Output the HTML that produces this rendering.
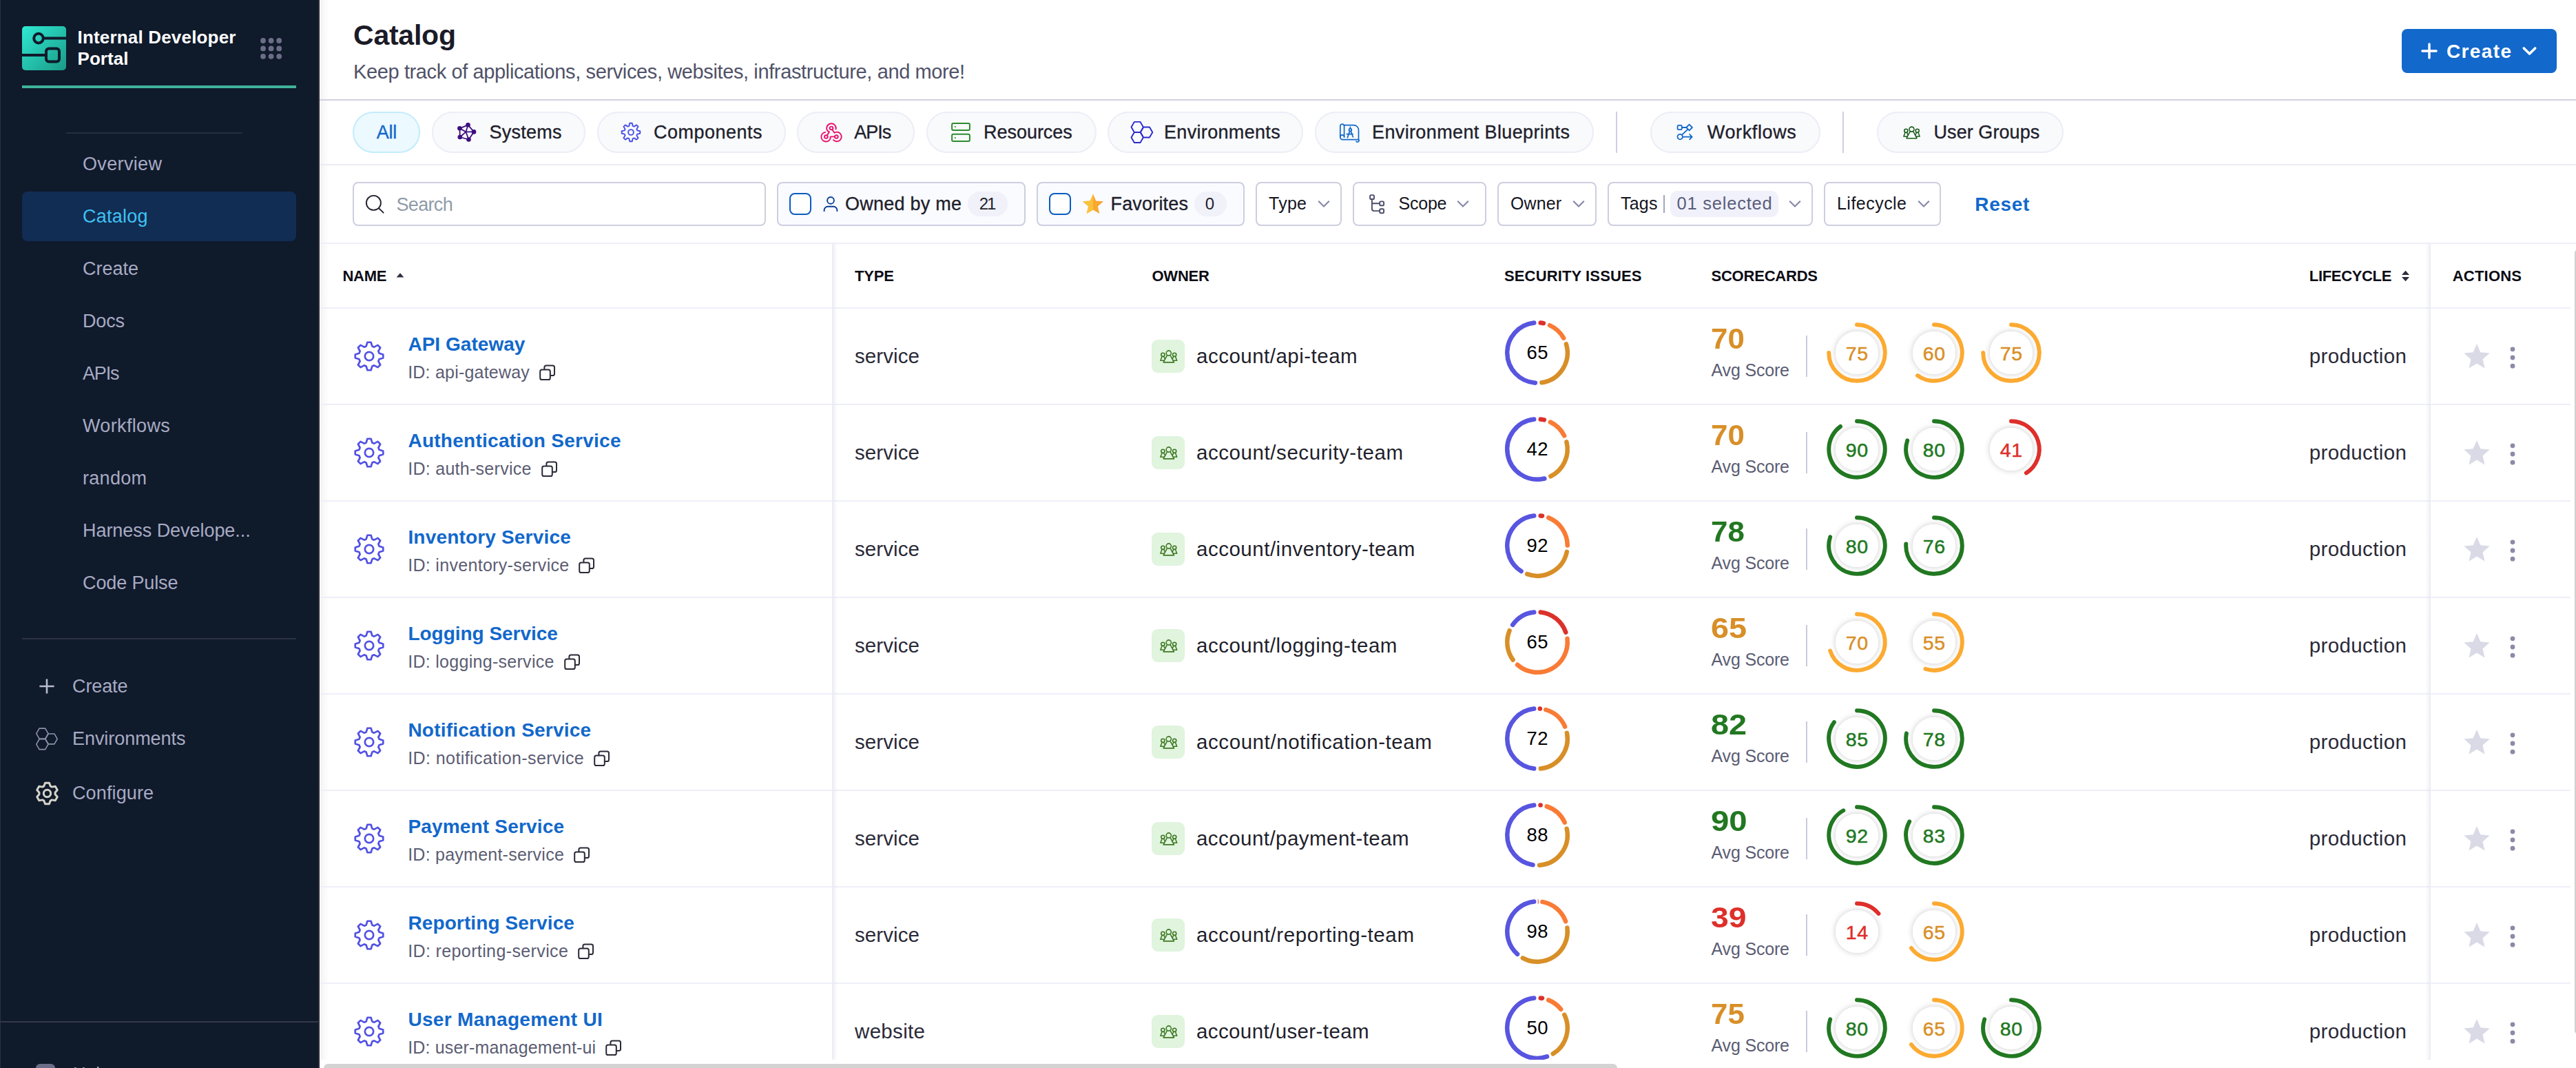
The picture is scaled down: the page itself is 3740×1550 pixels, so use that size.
<!DOCTYPE html><html><head><meta charset="utf-8"><title>Catalog</title><style>html,body{margin:0;padding:0;background:#fff;}body{width:3740px;height:1550px;overflow:hidden;position:relative;font-family:"Liberation Sans",sans-serif;}.t{position:absolute;white-space:nowrap;}.b{position:absolute;box-sizing:content-box;overflow:visible;}svg text{font-family:"Liberation Sans",sans-serif;}</style></head><body><svg width="0" height="0" style="position:absolute"><defs><filter id="sh" x="-50%" y="-50%" width="200%" height="200%"><feDropShadow dx="0" dy="0" stdDeviation="4" flood-color="#000" flood-opacity="0.22"/></filter></defs></svg><div class="b" style="left:0px;top:0px;width:464px;height:1550px;background:#0f1a2b;"></div>
<div class="b" style="left:0px;top:0px;width:1px;height:1550px;background:#2a3142;"></div>
<div class="b" style="left:462px;top:0px;width:1px;height:1550px;background:#31313f;"></div>
<div class="b" style="left:463px;top:0px;width:1px;height:1550px;background:#272733;"></div>
<svg class="b" style="left:32px;top:38px;" width="64" height="64" viewBox="0 0 64 64"><defs><linearGradient id="lg" x1="0" y1="0" x2="1" y2="1"><stop offset="0" stop-color="#2fe9d3"/><stop offset="1" stop-color="#1a9a86"/></linearGradient></defs><rect width="64" height="64" rx="5" fill="url(#lg)"/><g fill="none" stroke="#0f1a2b" stroke-width="4"><circle cx="24" cy="17.6" r="6.8"/><path d="M31,17.6H64"/><rect x="35" y="32.6" width="19" height="19" rx="4"/><path d="M0,42H35"/></g></svg>
<div class="t" style="left:112.5px;top:41.0px;font-size:26px;line-height:26px;color:#ffffff;font-weight:700;letter-spacing:0.18px;">Internal Developer</div>
<div class="t" style="left:112.5px;top:72.0px;font-size:26px;line-height:26px;color:#ffffff;font-weight:700;letter-spacing:0.06px;">Portal</div>
<svg class="b" style="left:378px;top:55.4px;" width="32" height="32" viewBox="0 0 32 32"><g fill="#6c6e88"><circle cx="4.0" cy="4.0" r="3.9"/><circle cx="4.0" cy="15.4" r="3.9"/><circle cx="4.0" cy="26.8" r="3.9"/><circle cx="15.6" cy="4.0" r="3.9"/><circle cx="15.6" cy="15.4" r="3.9"/><circle cx="15.6" cy="26.8" r="3.9"/><circle cx="27.2" cy="4.0" r="3.9"/><circle cx="27.2" cy="15.4" r="3.9"/><circle cx="27.2" cy="26.8" r="3.9"/></g></svg>
<div class="b" style="left:32px;top:124px;width:398px;height:4px;background:#3fb39b;"></div>
<div class="b" style="left:96px;top:192px;width:256px;height:2px;background:#252e41;"></div>
<div class="t" style="left:120.0px;top:225.0px;font-size:27px;line-height:27px;color:#a8aac3;letter-spacing:0.35px;">Overview</div>
<div class="b" style="left:32px;top:278px;width:398px;height:72px;background:#112d54;border-radius:8px;"></div>
<div class="t" style="left:120.0px;top:301.0px;font-size:27px;line-height:27px;color:#3fc1f3;letter-spacing:0.24px;">Catalog</div>
<div class="t" style="left:120.0px;top:377.0px;font-size:27px;line-height:27px;color:#a8aac3;">Create</div>
<div class="t" style="left:120.0px;top:453.0px;font-size:27px;line-height:27px;color:#a8aac3;letter-spacing:-0.17px;">Docs</div>
<div class="t" style="left:120.0px;top:529.0px;font-size:27px;line-height:27px;color:#a8aac3;letter-spacing:-1.17px;">APIs</div>
<div class="t" style="left:120.0px;top:605.0px;font-size:27px;line-height:27px;color:#a8aac3;letter-spacing:0.35px;">Workflows</div>
<div class="t" style="left:120.0px;top:681.0px;font-size:27px;line-height:27px;color:#a8aac3;letter-spacing:0.29px;">random</div>
<div class="t" style="left:120.0px;top:757.0px;font-size:27px;line-height:27px;color:#a8aac3;letter-spacing:-0.05px;">Harness Develope...</div>
<div class="t" style="left:120.0px;top:833.0px;font-size:27px;line-height:27px;color:#a8aac3;letter-spacing:-0.12px;">Code Pulse</div>
<div class="b" style="left:32px;top:926px;width:398px;height:2px;background:#2b3242;"></div>
<svg class="b" style="left:56px;top:984px;" width="24" height="24" viewBox="0 0 24 24"><path d="M12,1.4V22.6M1.4,12H22.6" stroke="#b9bbd0" stroke-width="2.6" fill="none"/></svg>
<div class="t" style="left:105.0px;top:983.0px;font-size:27px;line-height:27px;color:#a8aac3;letter-spacing:-0.11px;">Create</div>
<svg class="b" style="left:50.6px;top:1055.6px;" width="34" height="33" viewBox="0 0 34 33"><path d="M19.00,8.60L14.70,16.05L6.10,16.05L1.80,8.60L6.10,1.15L14.70,1.15ZM19.00,24.20L14.70,31.65L6.10,31.65L1.80,24.20L6.10,16.75L14.70,16.75ZM32.20,16.40L27.90,23.85L19.30,23.85L15.00,16.40L19.30,8.95L27.90,8.95Z" fill="none" stroke="#8f91ad" stroke-width="1.6" stroke-linejoin="round"/></svg>
<div class="t" style="left:105.0px;top:1059.0px;font-size:27px;line-height:27px;color:#a8aac3;letter-spacing:-0.06px;">Environments</div>
<svg class="b" style="left:50.6px;top:1134px;" width="35" height="35" viewBox="0 0 35 35"><path d="M12.78,6.90L14.52,2.19L20.48,2.19L22.22,6.90L24.32,8.12L29.27,7.27L32.25,12.42L29.04,16.29L29.04,18.71L32.25,22.58L29.27,27.73L24.32,26.88L22.22,28.10L20.48,32.81L14.52,32.81L12.78,28.10L10.68,26.88L5.73,27.73L2.75,22.58L5.96,18.71L5.96,16.29L2.75,12.42L5.73,7.27L10.68,8.12Z" fill="none" stroke="#d5d2c8" stroke-width="3" stroke-linejoin="round"/><circle cx="17.5" cy="17.5" r="5.2" fill="none" stroke="#d5d2c8" stroke-width="3"/></svg>
<div class="t" style="left:105.0px;top:1138.0px;font-size:27px;line-height:27px;color:#a8aac3;letter-spacing:0.12px;">Configure</div>
<div class="b" style="left:0px;top:1482px;width:462px;height:2px;background:#33384a;"></div>
<div class="b" style="left:52px;top:1544px;width:28px;height:10px;background:#6c6e88;border-radius:6px 6px 0 0;"></div>
<div class="t" style="left:106.0px;top:1545.0px;font-size:26px;line-height:26px;color:#a8aac3;">Help</div>
<div class="b" style="left:464px;top:0px;width:3276px;height:1550px;background:#fff;"></div>
<div class="b" style="left:465px;top:0px;width:13px;height:1550px;background:linear-gradient(90deg,#f1f1f2 0,#f8f8f8 35%,#fff 100%);"></div>
<div class="t" style="left:513.0px;top:31.0px;font-size:41px;line-height:41px;color:#1b1b28;font-weight:700;letter-spacing:-0.23px;">Catalog</div>
<div class="t" style="left:513.0px;top:90.0px;font-size:29px;line-height:29px;color:#4f5268;letter-spacing:-0.38px;">Keep track of applications, services, websites, infrastructure, and more!</div>
<div class="b" style="left:464px;top:144px;width:3276px;height:2px;background:#d0d1df;"></div>
<div class="b" style="left:3487px;top:42px;width:225px;height:64px;background:#1268cb;border-radius:8px;"></div>
<svg class="b" style="left:3515px;top:62px;" width="24" height="24" viewBox="0 0 24 24"><path d="M12,1.9V22.1M1.9,12H22.1" stroke="#fff" stroke-width="3.4" stroke-linecap="round" fill="none"/></svg>
<div class="t" style="left:3552.0px;top:61.0px;font-size:28px;line-height:28px;color:#ffffff;font-weight:700;letter-spacing:1.37px;">Create</div>
<svg class="b" style="left:3660.5px;top:67.2px;" width="24" height="16" viewBox="0 0 24 16"><path d="M3.3,3L11.5,11L19.7,3" stroke="#fff" stroke-width="3.6" fill="none" stroke-linecap="round" stroke-linejoin="round"/></svg>
<div class="b" style="left:512px;top:162px;width:94px;height:56px;background:#ecf9fe;border:2px solid #c3ecfb;border-radius:30px;"></div>
<div class="t" style="left:546.8px;top:179.0px;font-size:27px;line-height:27px;color:#1268cb;-webkit-text-stroke:0.35px;letter-spacing:-0.25px;">All</div>
<div class="b" style="left:627px;top:162px;width:219px;height:56px;background:#f9fafc;border:2px solid #ecedf6;border-radius:30px;"></div>
<div class="t" style="left:710.6px;top:179.0px;font-size:27px;line-height:27px;color:#1f1f2c;-webkit-text-stroke:0.35px;letter-spacing:0.25px;">Systems</div>
<div class="b" style="left:867px;top:162px;width:270px;height:56px;background:#f9fafc;border:2px solid #ecedf6;border-radius:30px;"></div>
<div class="t" style="left:949.0px;top:179.0px;font-size:27px;line-height:27px;color:#1f1f2c;-webkit-text-stroke:0.35px;letter-spacing:0.48px;">Components</div>
<div class="b" style="left:1157px;top:162px;width:167px;height:56px;background:#f9fafc;border:2px solid #ecedf6;border-radius:30px;"></div>
<div class="t" style="left:1240.3px;top:179.0px;font-size:27px;line-height:27px;color:#1f1f2c;-webkit-text-stroke:0.35px;letter-spacing:-1.01px;">APIs</div>
<div class="b" style="left:1345px;top:162px;width:243px;height:56px;background:#f9fafc;border:2px solid #ecedf6;border-radius:30px;"></div>
<div class="t" style="left:1428.0px;top:179.0px;font-size:27px;line-height:27px;color:#1f1f2c;-webkit-text-stroke:0.35px;letter-spacing:-0.03px;">Resources</div>
<div class="b" style="left:1608px;top:162px;width:280px;height:56px;background:#f9fafc;border:2px solid #ecedf6;border-radius:30px;"></div>
<div class="t" style="left:1690.0px;top:179.0px;font-size:27px;line-height:27px;color:#1f1f2c;-webkit-text-stroke:0.35px;letter-spacing:0.33px;">Environments</div>
<div class="b" style="left:1909px;top:162px;width:401px;height:56px;background:#f9fafc;border:2px solid #ecedf6;border-radius:30px;"></div>
<div class="t" style="left:1992.0px;top:179.0px;font-size:27px;line-height:27px;color:#1f1f2c;-webkit-text-stroke:0.35px;letter-spacing:0.37px;">Environment Blueprints</div>
<div class="b" style="left:2346px;top:162px;width:2px;height:60px;background:#cfd0e2;"></div>
<div class="b" style="left:2396px;top:162px;width:243px;height:56px;background:#f9fafc;border:2px solid #ecedf6;border-radius:30px;"></div>
<div class="t" style="left:2478.8px;top:179.0px;font-size:27px;line-height:27px;color:#1f1f2c;-webkit-text-stroke:0.35px;letter-spacing:0.62px;">Workflows</div>
<div class="b" style="left:2675px;top:162px;width:2px;height:60px;background:#cfd0e2;"></div>
<div class="b" style="left:2725px;top:162px;width:267px;height:56px;background:#f9fafc;border:2px solid #ecedf6;border-radius:30px;"></div>
<div class="t" style="left:2807.5px;top:179.0px;font-size:27px;line-height:27px;color:#1f1f2c;-webkit-text-stroke:0.35px;letter-spacing:0.07px;">User Groups</div>
<svg class="b" style="left:655px;top:170px;" width="50" height="44" viewBox="0 0 50 44"><path d="M12.4,16.3L24.5,11.3M24.5,11.3L33,21.4M33,21.4L25.5,32.5M25.5,32.5L12.8,29M12.8,29L12.4,16.3M21.4,21.4L24.5,11.3M21.4,21.4L12.4,16.3M21.4,21.4L33,21.4M21.4,21.4L12.8,29M21.4,21.4L25.5,32.5" stroke="#3d0f7d" stroke-width="1.8" fill="none"/><circle cx="24.5" cy="11.3" r="3.3" fill="#3d0f7d"/><circle cx="12.4" cy="16.3" r="3.3" fill="#3d0f7d"/><circle cx="33" cy="21.4" r="3.3" fill="#3d0f7d"/><circle cx="12.8" cy="29" r="3.3" fill="#3d0f7d"/><circle cx="25.5" cy="32.5" r="3.3" fill="#3d0f7d"/></svg>
<svg class="b" style="left:900px;top:176px;" width="32" height="32" viewBox="0 0 32 32"><path d="M13.35,6.77L14.25,2.71L17.75,2.71L18.65,6.77L20.65,7.60L24.16,5.37L26.63,7.84L24.40,11.35L25.23,13.35L29.29,14.25L29.29,17.75L25.23,18.65L24.40,20.65L26.63,24.16L24.16,26.63L20.65,24.40L18.65,25.23L17.75,29.29L14.25,29.29L13.35,25.23L11.35,24.40L7.84,26.63L5.37,24.16L7.60,20.65L6.77,18.65L2.71,17.75L2.71,14.25L6.77,13.35L7.60,11.35L5.37,7.84L7.84,5.37L11.35,7.60Z" fill="none" stroke="#4a4fe6" stroke-width="1.9" stroke-linejoin="round"/><circle cx="16" cy="16" r="3.9" fill="none" stroke="#4a4fe6" stroke-width="1.9"/></svg>
<svg class="b" style="left:1180px;top:170px;" width="50" height="44" viewBox="0 0 50 44"><g transform="translate(27 24.5) scale(0.94) translate(-27 -24.5)" fill="none" stroke="#e6166e" stroke-width="2.05" stroke-linecap="round" stroke-linejoin="round"><circle cx="27" cy="15.4" r="2.5"/><circle cx="18.9" cy="28.8" r="2.5"/><circle cx="34.8" cy="28.8" r="2.5"/><path d="M34,17.2A7.2,7.2 0 1 0 21,19.6L23.8,21.2L20.3,26.6"/><path d="M17.6,21.8A7.2,7.2 0 1 0 25.4,31.5L25.6,28.6H32.2"/><path d="M30.2,33.6A7.2,7.2 0 1 0 31.6,22.6L28.4,17.6"/></g></svg>
<svg class="b" style="left:1370px;top:165px;" width="50" height="54" viewBox="0 0 50 54"><g fill="none" stroke="#2e8b2e" stroke-width="2"><rect x="12.1" y="13.9" width="25.8" height="10.1" rx="2"/><rect x="12.1" y="29.8" width="25.8" height="10.2" rx="2"/></g><rect x="15.9" y="18" width="2" height="2" fill="#5aa85a"/><rect x="15.9" y="34" width="2" height="2" fill="#5aa85a"/></svg>
<svg class="b" style="left:1630px;top:165px;" width="60" height="54" viewBox="0 0 60 54"><path d="M29.90,19.40L25.55,26.93L16.85,26.93L12.50,19.40L16.85,11.87L25.55,11.87ZM29.90,34.50L25.55,42.03L16.85,42.03L12.50,34.50L16.85,26.97L25.55,26.97ZM43.30,27.00L38.95,34.53L30.25,34.53L25.90,27.00L30.25,19.47L38.95,19.47Z" fill="none" stroke="#2b2bcc" stroke-width="1.9" stroke-linejoin="round"/></svg>
<svg class="b" style="left:1930px;top:165px;" width="60" height="54" viewBox="0 0 60 54"><g fill="none" stroke="#1268cb" stroke-width="1.7" stroke-linecap="round" stroke-linejoin="round"><path d="M15.8,34V18a2.9,2.9 0 0 1 5.8,0V33"/><path d="M21.6,16.7H35.5a7,7 0 0 1 7,7V38"/><path d="M15.8,34a3.6,3.6 0 0 0 3.6,3.6H42.5a2,2 0 0 1-3.4,2.6"/><path d="M15.8,33.4a2.9,2.9 0 0 1 5.8,0.8"/><circle cx="30.4" cy="23.6" r="1.9"/><path d="M29.6,25.4L26.4,34.6M31.2,25.4L34.4,33.8M25.4,29.6H34M30.4,19.4V21.6"/></g></svg>
<svg class="b" style="left:2420px;top:165px;" width="60" height="54" viewBox="0 0 60 54"><g fill="none" stroke="#1268cb" stroke-width="1.8" stroke-linecap="round" stroke-linejoin="round"><rect x="15.6" y="16.8" width="6.2" height="6.4" rx="1.6"/><path d="M22,20H28.3M32.6,15.7L36.9,20L32.6,24.3L28.3,20Z"/><path d="M30.2,22.8L22,30.6"/><circle cx="19.2" cy="33.6" r="3.7"/><path d="M23,33.6H36.4M33.2,30L36.6,33.6L33.2,37.4"/></g></svg>
<svg class="b" style="left:2762.5px;top:182.5px;" width="25" height="19" viewBox="-0.5 -0.3 25.6 19"><g fill="none" stroke="#1a5c1a" stroke-width="1.6" stroke-linejoin="round"><circle cx="12.3" cy="4.2" r="3.6"/><path d="M9.9,7.6L4.6,17.6H20L14.7,7.6"/><circle cx="3.9" cy="6.5" r="2.6"/><path d="M2.6,9L0.4,14.9H6.2M5.2,9L6.9,13"/><circle cx="20.7" cy="6.5" r="2.6"/><path d="M22,9L24.2,14.9H18.4M19.4,9L17.7,13"/></g></svg>
<div class="b" style="left:464px;top:238px;width:3276px;height:2px;background:#ececf4;"></div>
<div class="b" style="left:512px;top:264px;width:596px;height:60px;border:2px solid #cdcee0;border-radius:8px;background:#fff;"></div>
<svg class="b" style="left:529px;top:281px;" width="30" height="30" viewBox="0 0 30 30"><circle cx="13.4" cy="13.4" r="10.5" fill="none" stroke="#22222e" stroke-width="1.9"/><path d="M21.4,21.6L27.6,27.6" stroke="#22222e" stroke-width="2" stroke-linecap="round"/></svg>
<div class="t" style="left:575.5px;top:284.0px;font-size:27px;line-height:27px;color:#8f9ba8;letter-spacing:-0.67px;">Search</div>
<div class="b" style="left:1128px;top:264px;width:357px;height:60px;border:2px solid #cdcee0;border-radius:8px;background:#fafbff;"></div>
<div class="b" style="left:1146px;top:280px;width:28px;height:28px;border:2px solid #0b5cc0;border-radius:8px;background:#fff;"></div>
<svg class="b" style="left:1195px;top:283px;" width="22" height="26" viewBox="0 0 22 26"><g fill="none" stroke="#0a3d91" stroke-width="1.9"><circle cx="11" cy="7.9" r="4.9"/><path d="M1.6,24V22a5.2,5.2 0 0 1 5.2,-5.2H15.2a5.2,5.2 0 0 1 5.2,5.2V24"/></g></svg>
<div class="t" style="left:1227.0px;top:283.0px;font-size:27px;line-height:27px;color:#1f1f2c;-webkit-text-stroke:0.35px;letter-spacing:0.24px;">Owned by me</div>
<div class="b" style="left:1405px;top:278px;width:58px;height:36px;background:#f0f1f9;border-radius:18px;"></div>
<div class="t" style="left:1421.7px;top:284.0px;font-size:24px;line-height:24px;color:#1f1f2c;letter-spacing:-2.00px;">21</div>
<div class="b" style="left:1505px;top:264px;width:298px;height:60px;border:2px solid #cdcee0;border-radius:8px;background:#fafbff;"></div>
<div class="b" style="left:1523px;top:280px;width:28px;height:28px;border:2px solid #0b5cc0;border-radius:8px;background:#fff;"></div>
<svg class="b" style="left:1571px;top:281.4px;" width="32" height="32" viewBox="0 0 32 32"><defs><clipPath id="hl"><rect x="0" y="0" width="16" height="32"/></clipPath></defs><path d="M16.00,0.40L20.23,10.38L31.03,11.32L22.85,18.42L25.29,28.98L16.00,23.40L6.71,28.98L9.15,18.42L0.97,11.32L11.77,10.38Z" fill="#f8a830"/><path d="M16.00,0.40L20.23,10.38L31.03,11.32L22.85,18.42L25.29,28.98L16.00,23.40L6.71,28.98L9.15,18.42L0.97,11.32L11.77,10.38Z" fill="#fbc13d" clip-path="url(#hl)"/></svg>
<div class="t" style="left:1612.5px;top:283.0px;font-size:27px;line-height:27px;color:#1f1f2c;-webkit-text-stroke:0.35px;letter-spacing:0.18px;">Favorites</div>
<div class="b" style="left:1734px;top:278px;width:47px;height:36px;background:#f0f1f9;border-radius:18px;"></div>
<div class="t" style="left:1749.8px;top:284.0px;font-size:24px;line-height:24px;color:#1f1f2c;">0</div>
<div class="b" style="left:1823px;top:264px;width:121px;height:60px;border:2px solid #cdcee0;border-radius:8px;background:#fff;"></div>
<div class="t" style="left:1842.0px;top:283.0px;font-size:25px;line-height:25px;color:#15151f;letter-spacing:0.27px;">Type</div>
<svg class="b" style="left:1912.5px;top:290px;" width="18" height="12" viewBox="0 0 18 12"><path d="M1.2,1.8L9,9.6L16.8,1.8" fill="none" stroke="#8587a8" stroke-width="2.1"/></svg>
<div class="b" style="left:1964px;top:264px;width:190px;height:60px;border:2px solid #cdcee0;border-radius:8px;background:#fff;"></div>
<div class="t" style="left:2030.5px;top:283.0px;font-size:25px;line-height:25px;color:#15151f;letter-spacing:-0.22px;">Scope</div>
<svg class="b" style="left:2115px;top:290px;" width="18" height="12" viewBox="0 0 18 12"><path d="M1.2,1.8L9,9.6L16.8,1.8" fill="none" stroke="#8587a8" stroke-width="2.1"/></svg>
<svg class="b" style="left:1987px;top:280.8px;" width="24" height="30" viewBox="0 0 24 30"><g fill="none" stroke="#4a4d6a" stroke-width="1.9"><rect x="2.1" y="2.1" width="5.9" height="5.9" rx="1.6"/><rect x="16.2" y="11.4" width="5.9" height="5.9" rx="1.6"/><rect x="16.2" y="22.3" width="5.9" height="5.9" rx="1.6"/><path d="M4.9,8V22.1a3,3 0 0 0 3,3H16.2M4.9,14.2H16.2"/></g></svg>
<div class="b" style="left:2174px;top:264px;width:140px;height:60px;border:2px solid #cdcee0;border-radius:8px;background:#fff;"></div>
<div class="t" style="left:2193.0px;top:283.0px;font-size:25px;line-height:25px;color:#15151f;letter-spacing:0.09px;">Owner</div>
<svg class="b" style="left:2282.5px;top:290px;" width="18" height="12" viewBox="0 0 18 12"><path d="M1.2,1.8L9,9.6L16.8,1.8" fill="none" stroke="#8587a8" stroke-width="2.1"/></svg>
<div class="b" style="left:2334px;top:264px;width:294px;height:60px;border:2px solid #cdcee0;border-radius:8px;background:#fff;"></div>
<div class="t" style="left:2353.0px;top:283.0px;font-size:25px;line-height:25px;color:#15151f;letter-spacing:0.23px;">Tags</div>
<div class="b" style="left:2415px;top:283px;width:2px;height:26px;background:#a3a5c0;"></div>
<div class="b" style="left:2425px;top:277px;width:157px;height:38px;background:#f0f1fb;border-radius:10px;"></div>
<div class="t" style="left:2434.6px;top:283.0px;font-size:25.5px;line-height:25.5px;color:#5a5d7a;letter-spacing:0.76px;">01 selected</div>
<svg class="b" style="left:2597px;top:290px;" width="18" height="12" viewBox="0 0 18 12"><path d="M1.2,1.8L9,9.6L16.8,1.8" fill="none" stroke="#8587a8" stroke-width="2.1"/></svg>
<div class="b" style="left:2648px;top:264px;width:166px;height:60px;border:2px solid #cdcee0;border-radius:8px;background:#fff;"></div>
<div class="t" style="left:2667.0px;top:283.0px;font-size:25px;line-height:25px;color:#15151f;letter-spacing:0.47px;">Lifecycle</div>
<svg class="b" style="left:2784px;top:290px;" width="18" height="12" viewBox="0 0 18 12"><path d="M1.2,1.8L9,9.6L16.8,1.8" fill="none" stroke="#8587a8" stroke-width="2.1"/></svg>
<div class="t" style="left:2867.3px;top:283.0px;font-size:28px;line-height:28px;color:#1268cb;font-weight:700;letter-spacing:0.68px;">Reset</div>
<div class="b" style="left:464px;top:352px;width:3276px;height:2px;background:#eeeff9;"></div>
<div class="t" style="left:497.4px;top:390.0px;font-size:22px;line-height:22px;color:#0d0d16;font-weight:700;letter-spacing:-0.26px;">NAME</div>
<svg class="b" style="left:575px;top:395px;" width="12" height="9" viewBox="0 0 12 9"><path d="M0.6,7.6L6,1.2L11.4,7.6Z" fill="#2e2e3e"/></svg>
<div class="t" style="left:1241.0px;top:390.0px;font-size:22px;line-height:22px;color:#0d0d16;font-weight:700;letter-spacing:-0.15px;">TYPE</div>
<div class="t" style="left:1672.4px;top:390.0px;font-size:22px;line-height:22px;color:#0d0d16;font-weight:700;letter-spacing:-0.18px;">OWNER</div>
<div class="t" style="left:2184.0px;top:390.0px;font-size:22px;line-height:22px;color:#0d0d16;font-weight:700;letter-spacing:0.13px;">SECURITY ISSUES</div>
<div class="t" style="left:2484.5px;top:390.0px;font-size:22px;line-height:22px;color:#0d0d16;font-weight:700;letter-spacing:-0.22px;">SCORECARDS</div>
<div class="t" style="left:3352.8px;top:390.0px;font-size:22px;line-height:22px;color:#0d0d16;font-weight:700;letter-spacing:-0.33px;">LIFECYCLE</div>
<svg class="b" style="left:3485.5px;top:391.5px;" width="13" height="17" viewBox="0 0 13 17"><path d="M1,7L6.5,0.8L12,7ZM1,10L6.5,16.2L12,10Z" fill="#2e2e3e"/></svg>
<div class="t" style="left:3560.7px;top:390.0px;font-size:22px;line-height:22px;color:#0d0d16;font-weight:700;letter-spacing:0.22px;">ACTIONS</div>
<div class="b" style="left:464px;top:446px;width:3268px;height:2px;background:#eeeff9;"></div>
<svg class="b" style="left:514px;top:495px;" width="44" height="44" viewBox="0 0 44 44"><path d="M17.68,7.43L19.44,1.76L24.56,1.76L26.32,7.43L29.25,8.64L34.50,5.88L38.12,9.50L35.36,14.75L36.57,17.68L42.24,19.44L42.24,24.56L36.57,26.32L35.36,29.25L38.12,34.50L34.50,38.12L29.25,35.36L26.32,36.57L24.56,42.24L19.44,42.24L17.68,36.57L14.75,35.36L9.50,38.12L5.88,34.50L8.64,29.25L7.43,26.32L1.76,24.56L1.76,19.44L7.43,17.68L8.64,14.75L5.88,9.50L9.50,5.88L14.75,8.64Z" fill="none" stroke="#5251e3" stroke-width="2.7" stroke-linejoin="round"/><circle cx="22" cy="22" r="6.2" fill="none" stroke="#5251e3" stroke-width="2.7"/></svg>
<div class="t" style="left:592.4px;top:486.0px;font-size:28px;line-height:28px;color:#1268cb;font-weight:700;letter-spacing:0.04px;">API Gateway</div>
<div class="t" style="left:592.2px;top:528.0px;font-size:25px;line-height:25px;color:#5b5d73;letter-spacing:0.21px;">ID: api-gateway</div>
<svg class="b" style="left:783.1px;top:528.6px;" width="24" height="24" viewBox="0 0 24 24"><g fill="#fff" stroke="#2a2a38" stroke-width="2"><rect x="7.4" y="1.4" width="14.6" height="14.6" rx="2.6"/><rect x="1.2" y="7.4" width="14.6" height="14.6" rx="2.6"/></g></svg>
<div class="t" style="left:1241.0px;top:502.0px;font-size:29.5px;line-height:29.5px;color:#2a2a38;letter-spacing:0.09px;">service</div>
<div class="b" style="left:1672px;top:493px;width:48px;height:48px;background:#e0f4de;border-radius:9px;"></div>
<svg class="b" style="left:1683.5px;top:508px;" width="25.6" height="19" viewBox="-0.5 -0.3 25.6 19"><g fill="none" stroke="#3f7a25" stroke-width="1.6" stroke-linejoin="round"><circle cx="12.3" cy="4.2" r="3.6"/><path d="M9.9,7.6L4.6,17.6H20L14.7,7.6"/><circle cx="3.9" cy="6.5" r="2.6"/><path d="M2.6,9L0.4,14.9H6.2M5.2,9L6.9,13"/><circle cx="20.7" cy="6.5" r="2.6"/><path d="M22,9L24.2,14.9H18.4M19.4,9L17.7,13"/></g></svg>
<div class="t" style="left:1737.0px;top:502.0px;font-size:29.5px;line-height:29.5px;color:#1f1f2c;letter-spacing:0.49px;">account/api-team</div>
<svg class="b" style="left:2182px;top:462px;" width="100" height="100" viewBox="0 0 100 100"><g fill="none" stroke-width="6.5" stroke-linecap="round"><path d="M54.77,6.51A43.75,43.75 0 0 1 58.90,7.17" stroke="#dc312b"/><path d="M67.97,10.11A43.75,43.75 0 0 1 88.17,28.62" stroke="#f97b35"/><path d="M91.90,37.40A43.75,43.75 0 0 1 56.43,93.27" stroke="#d88f27"/><path d="M46.91,93.64A43.75,43.75 0 0 1 45.23,6.51" stroke="#5855e0"/></g><text x="50.2" y="59.3" text-anchor="middle" font-size="27.5" letter-spacing="0.5" fill="#000">65</text></svg>
<div class="t" style="left:2484.0px;top:471.0px;font-size:42px;line-height:42px;color:#d88f27;font-weight:700;transform-origin:0 0;transform:scaleX(1.045);">70</div>
<div class="t" style="left:2484.5px;top:525.0px;font-size:25px;line-height:25px;color:#5b5d73;letter-spacing:-0.17px;">Avg Score</div>
<div class="b" style="left:2622px;top:487px;width:2px;height:60px;background:#c9cbdc;"></div>
<svg class="b" style="left:2646px;top:462px;" width="100" height="100" viewBox="0 0 100 100"><circle cx="50" cy="50" r="31" fill="#fff" filter="url(#sh)"/><path d="M50.00,9.20A40.8,40.8 0 1 1 9.20,50.00" fill="none" stroke="#fcaa31" stroke-width="5.9" stroke-linecap="round"/><text x="50.3" y="60.6" text-anchor="middle" font-size="28.5" letter-spacing="0.6" fill="#d88f27" stroke="#d88f27" stroke-width="0.5">75</text></svg>
<svg class="b" style="left:2758px;top:462px;" width="100" height="100" viewBox="0 0 100 100"><circle cx="50" cy="50" r="31" fill="#fff" filter="url(#sh)"/><path d="M50.00,9.20A40.8,40.8 0 1 1 26.02,83.01" fill="none" stroke="#fcaa31" stroke-width="5.9" stroke-linecap="round"/><text x="50.3" y="60.6" text-anchor="middle" font-size="28.5" letter-spacing="0.6" fill="#d88f27" stroke="#d88f27" stroke-width="0.5">60</text></svg>
<svg class="b" style="left:2870px;top:462px;" width="100" height="100" viewBox="0 0 100 100"><circle cx="50" cy="50" r="31" fill="#fff" filter="url(#sh)"/><path d="M50.00,9.20A40.8,40.8 0 1 1 9.20,50.00" fill="none" stroke="#fcaa31" stroke-width="5.9" stroke-linecap="round"/><text x="50.3" y="60.6" text-anchor="middle" font-size="28.5" letter-spacing="0.6" fill="#d88f27" stroke="#d88f27" stroke-width="0.5">75</text></svg>
<div class="t" style="left:3352.8px;top:502.0px;font-size:29.5px;line-height:29.5px;color:#2a2a38;letter-spacing:0.36px;">production</div>
<svg class="b" style="left:3576.7px;top:498.6px;" width="38" height="38" viewBox="0 0 38 38"><path d="M19.00,0.00L24.29,12.32L37.64,13.54L27.56,22.38L30.52,35.46L19.00,28.60L7.48,35.46L10.44,22.38L0.36,13.54L13.71,12.32Z" fill="#dadae7"/></svg>
<svg class="b" style="left:3643.8px;top:502px;" width="8" height="34" viewBox="0 0 8 34"><g fill="#8a8ba6"><circle cx="4" cy="4.8" r="3.4"/><circle cx="4" cy="17" r="3.4"/><circle cx="4" cy="29.2" r="3.4"/></g></svg>
<div class="b" style="left:464px;top:586px;width:3268px;height:2px;background:#eeeff9;"></div>
<svg class="b" style="left:514px;top:635px;" width="44" height="44" viewBox="0 0 44 44"><path d="M17.68,7.43L19.44,1.76L24.56,1.76L26.32,7.43L29.25,8.64L34.50,5.88L38.12,9.50L35.36,14.75L36.57,17.68L42.24,19.44L42.24,24.56L36.57,26.32L35.36,29.25L38.12,34.50L34.50,38.12L29.25,35.36L26.32,36.57L24.56,42.24L19.44,42.24L17.68,36.57L14.75,35.36L9.50,38.12L5.88,34.50L8.64,29.25L7.43,26.32L1.76,24.56L1.76,19.44L7.43,17.68L8.64,14.75L5.88,9.50L9.50,5.88L14.75,8.64Z" fill="none" stroke="#5251e3" stroke-width="2.7" stroke-linejoin="round"/><circle cx="22" cy="22" r="6.2" fill="none" stroke="#5251e3" stroke-width="2.7"/></svg>
<div class="t" style="left:592.4px;top:626.0px;font-size:28px;line-height:28px;color:#1268cb;font-weight:700;letter-spacing:0.27px;">Authentication Service</div>
<div class="t" style="left:592.2px;top:668.0px;font-size:25px;line-height:25px;color:#5b5d73;letter-spacing:0.28px;">ID: auth-service</div>
<svg class="b" style="left:785.7px;top:668.6px;" width="24" height="24" viewBox="0 0 24 24"><g fill="#fff" stroke="#2a2a38" stroke-width="2"><rect x="7.4" y="1.4" width="14.6" height="14.6" rx="2.6"/><rect x="1.2" y="7.4" width="14.6" height="14.6" rx="2.6"/></g></svg>
<div class="t" style="left:1241.0px;top:642.0px;font-size:29.5px;line-height:29.5px;color:#2a2a38;letter-spacing:0.09px;">service</div>
<div class="b" style="left:1672px;top:633px;width:48px;height:48px;background:#e0f4de;border-radius:9px;"></div>
<svg class="b" style="left:1683.5px;top:648px;" width="25.6" height="19" viewBox="-0.5 -0.3 25.6 19"><g fill="none" stroke="#3f7a25" stroke-width="1.6" stroke-linejoin="round"><circle cx="12.3" cy="4.2" r="3.6"/><path d="M9.9,7.6L4.6,17.6H20L14.7,7.6"/><circle cx="3.9" cy="6.5" r="2.6"/><path d="M2.6,9L0.4,14.9H6.2M5.2,9L6.9,13"/><circle cx="20.7" cy="6.5" r="2.6"/><path d="M22,9L24.2,14.9H18.4M19.4,9L17.7,13"/></g></svg>
<div class="t" style="left:1737.0px;top:642.0px;font-size:29.5px;line-height:29.5px;color:#1f1f2c;letter-spacing:0.57px;">account/security-team</div>
<svg class="b" style="left:2182px;top:602px;" width="100" height="100" viewBox="0 0 100 100"><g fill="none" stroke-width="6.5" stroke-linecap="round"><path d="M54.77,6.51A43.75,43.75 0 0 1 59.87,7.38" stroke="#dc312b"/><path d="M68.87,10.53A43.75,43.75 0 0 1 89.10,30.37" stroke="#f97b35"/><path d="M92.42,39.31A43.75,43.75 0 0 1 69.35,89.24" stroke="#d88f27"/><path d="M60.39,92.50A43.75,43.75 0 1 1 45.23,6.51" stroke="#5855e0"/></g><text x="50.2" y="59.3" text-anchor="middle" font-size="27.5" letter-spacing="0.5" fill="#000">42</text></svg>
<div class="t" style="left:2484.0px;top:611.0px;font-size:42px;line-height:42px;color:#d88f27;font-weight:700;transform-origin:0 0;transform:scaleX(1.045);">70</div>
<div class="t" style="left:2484.5px;top:665.0px;font-size:25px;line-height:25px;color:#5b5d73;letter-spacing:-0.17px;">Avg Score</div>
<div class="b" style="left:2622px;top:627px;width:2px;height:60px;background:#c9cbdc;"></div>
<svg class="b" style="left:2646px;top:602px;" width="100" height="100" viewBox="0 0 100 100"><circle cx="50" cy="50" r="31" fill="#fff" filter="url(#sh)"/><path d="M50.00,9.20A40.8,40.8 0 1 1 26.02,16.99" fill="none" stroke="#217821" stroke-width="5.9" stroke-linecap="round"/><text x="50.3" y="60.6" text-anchor="middle" font-size="28.5" letter-spacing="0.6" fill="#217821" stroke="#217821" stroke-width="0.5">90</text></svg>
<svg class="b" style="left:2758px;top:602px;" width="100" height="100" viewBox="0 0 100 100"><circle cx="50" cy="50" r="31" fill="#fff" filter="url(#sh)"/><path d="M50.00,9.20A40.8,40.8 0 1 1 11.20,37.39" fill="none" stroke="#217821" stroke-width="5.9" stroke-linecap="round"/><text x="50.3" y="60.6" text-anchor="middle" font-size="28.5" letter-spacing="0.6" fill="#217821" stroke="#217821" stroke-width="0.5">80</text></svg>
<svg class="b" style="left:2870px;top:602px;" width="100" height="100" viewBox="0 0 100 100"><circle cx="50" cy="50" r="31" fill="#fff" filter="url(#sh)"/><path d="M50.00,9.20A40.8,40.8 0 0 1 71.86,84.45" fill="none" stroke="#de2f2a" stroke-width="5.9" stroke-linecap="round"/><text x="50.3" y="60.6" text-anchor="middle" font-size="28.5" letter-spacing="0.6" fill="#de2f2a" stroke="#de2f2a" stroke-width="0.5">41</text></svg>
<div class="t" style="left:3352.8px;top:642.0px;font-size:29.5px;line-height:29.5px;color:#2a2a38;letter-spacing:0.36px;">production</div>
<svg class="b" style="left:3576.7px;top:638.6px;" width="38" height="38" viewBox="0 0 38 38"><path d="M19.00,0.00L24.29,12.32L37.64,13.54L27.56,22.38L30.52,35.46L19.00,28.60L7.48,35.46L10.44,22.38L0.36,13.54L13.71,12.32Z" fill="#dadae7"/></svg>
<svg class="b" style="left:3643.8px;top:642px;" width="8" height="34" viewBox="0 0 8 34"><g fill="#8a8ba6"><circle cx="4" cy="4.8" r="3.4"/><circle cx="4" cy="17" r="3.4"/><circle cx="4" cy="29.2" r="3.4"/></g></svg>
<div class="b" style="left:464px;top:726px;width:3268px;height:2px;background:#eeeff9;"></div>
<svg class="b" style="left:514px;top:775px;" width="44" height="44" viewBox="0 0 44 44"><path d="M17.68,7.43L19.44,1.76L24.56,1.76L26.32,7.43L29.25,8.64L34.50,5.88L38.12,9.50L35.36,14.75L36.57,17.68L42.24,19.44L42.24,24.56L36.57,26.32L35.36,29.25L38.12,34.50L34.50,38.12L29.25,35.36L26.32,36.57L24.56,42.24L19.44,42.24L17.68,36.57L14.75,35.36L9.50,38.12L5.88,34.50L8.64,29.25L7.43,26.32L1.76,24.56L1.76,19.44L7.43,17.68L8.64,14.75L5.88,9.50L9.50,5.88L14.75,8.64Z" fill="none" stroke="#5251e3" stroke-width="2.7" stroke-linejoin="round"/><circle cx="22" cy="22" r="6.2" fill="none" stroke="#5251e3" stroke-width="2.7"/></svg>
<div class="t" style="left:592.4px;top:766.0px;font-size:28px;line-height:28px;color:#1268cb;font-weight:700;letter-spacing:0.18px;">Inventory Service</div>
<div class="t" style="left:592.2px;top:808.0px;font-size:25px;line-height:25px;color:#5b5d73;letter-spacing:0.31px;">ID: inventory-service</div>
<svg class="b" style="left:840.4px;top:808.6px;" width="24" height="24" viewBox="0 0 24 24"><g fill="#fff" stroke="#2a2a38" stroke-width="2"><rect x="7.4" y="1.4" width="14.6" height="14.6" rx="2.6"/><rect x="1.2" y="7.4" width="14.6" height="14.6" rx="2.6"/></g></svg>
<div class="t" style="left:1241.0px;top:782.0px;font-size:29.5px;line-height:29.5px;color:#2a2a38;letter-spacing:0.09px;">service</div>
<div class="b" style="left:1672px;top:773px;width:48px;height:48px;background:#e0f4de;border-radius:9px;"></div>
<svg class="b" style="left:1683.5px;top:788px;" width="25.6" height="19" viewBox="-0.5 -0.3 25.6 19"><g fill="none" stroke="#3f7a25" stroke-width="1.6" stroke-linejoin="round"><circle cx="12.3" cy="4.2" r="3.6"/><path d="M9.9,7.6L4.6,17.6H20L14.7,7.6"/><circle cx="3.9" cy="6.5" r="2.6"/><path d="M2.6,9L0.4,14.9H6.2M5.2,9L6.9,13"/><circle cx="20.7" cy="6.5" r="2.6"/><path d="M22,9L24.2,14.9H18.4M19.4,9L17.7,13"/></g></svg>
<div class="t" style="left:1737.0px;top:782.0px;font-size:29.5px;line-height:29.5px;color:#1f1f2c;letter-spacing:0.51px;">account/inventory-team</div>
<svg class="b" style="left:2182px;top:742px;" width="100" height="100" viewBox="0 0 100 100"><g fill="none" stroke-width="6.5" stroke-linecap="round"><path d="M54.77,6.51A43.75,43.75 0 0 1 57.03,6.82" stroke="#dc312b"/><path d="M66.22,9.37A43.75,43.75 0 0 1 93.75,49.42" stroke="#f97b35"/><path d="M92.83,58.91A43.75,43.75 0 0 1 35.22,91.18" stroke="#d88f27"/><path d="M26.65,87.00A43.75,43.75 0 0 1 45.23,6.51" stroke="#5855e0"/></g><text x="50.2" y="59.3" text-anchor="middle" font-size="27.5" letter-spacing="0.5" fill="#000">92</text></svg>
<div class="t" style="left:2484.0px;top:751.0px;font-size:42px;line-height:42px;color:#217821;font-weight:700;transform-origin:0 0;transform:scaleX(1.045);">78</div>
<div class="t" style="left:2484.5px;top:805.0px;font-size:25px;line-height:25px;color:#5b5d73;letter-spacing:-0.17px;">Avg Score</div>
<div class="b" style="left:2622px;top:767px;width:2px;height:60px;background:#c9cbdc;"></div>
<svg class="b" style="left:2646px;top:742px;" width="100" height="100" viewBox="0 0 100 100"><circle cx="50" cy="50" r="31" fill="#fff" filter="url(#sh)"/><path d="M50.00,9.20A40.8,40.8 0 1 1 11.20,37.39" fill="none" stroke="#217821" stroke-width="5.9" stroke-linecap="round"/><text x="50.3" y="60.6" text-anchor="middle" font-size="28.5" letter-spacing="0.6" fill="#217821" stroke="#217821" stroke-width="0.5">80</text></svg>
<svg class="b" style="left:2758px;top:742px;" width="100" height="100" viewBox="0 0 100 100"><circle cx="50" cy="50" r="31" fill="#fff" filter="url(#sh)"/><path d="M50.00,9.20A40.8,40.8 0 1 1 9.28,47.44" fill="none" stroke="#217821" stroke-width="5.9" stroke-linecap="round"/><text x="50.3" y="60.6" text-anchor="middle" font-size="28.5" letter-spacing="0.6" fill="#217821" stroke="#217821" stroke-width="0.5">76</text></svg>
<div class="t" style="left:3352.8px;top:782.0px;font-size:29.5px;line-height:29.5px;color:#2a2a38;letter-spacing:0.36px;">production</div>
<svg class="b" style="left:3576.7px;top:778.6px;" width="38" height="38" viewBox="0 0 38 38"><path d="M19.00,0.00L24.29,12.32L37.64,13.54L27.56,22.38L30.52,35.46L19.00,28.60L7.48,35.46L10.44,22.38L0.36,13.54L13.71,12.32Z" fill="#dadae7"/></svg>
<svg class="b" style="left:3643.8px;top:782px;" width="8" height="34" viewBox="0 0 8 34"><g fill="#8a8ba6"><circle cx="4" cy="4.8" r="3.4"/><circle cx="4" cy="17" r="3.4"/><circle cx="4" cy="29.2" r="3.4"/></g></svg>
<div class="b" style="left:464px;top:866px;width:3268px;height:2px;background:#eeeff9;"></div>
<svg class="b" style="left:514px;top:915px;" width="44" height="44" viewBox="0 0 44 44"><path d="M17.68,7.43L19.44,1.76L24.56,1.76L26.32,7.43L29.25,8.64L34.50,5.88L38.12,9.50L35.36,14.75L36.57,17.68L42.24,19.44L42.24,24.56L36.57,26.32L35.36,29.25L38.12,34.50L34.50,38.12L29.25,35.36L26.32,36.57L24.56,42.24L19.44,42.24L17.68,36.57L14.75,35.36L9.50,38.12L5.88,34.50L8.64,29.25L7.43,26.32L1.76,24.56L1.76,19.44L7.43,17.68L8.64,14.75L5.88,9.50L9.50,5.88L14.75,8.64Z" fill="none" stroke="#5251e3" stroke-width="2.7" stroke-linejoin="round"/><circle cx="22" cy="22" r="6.2" fill="none" stroke="#5251e3" stroke-width="2.7"/></svg>
<div class="t" style="left:592.4px;top:906.0px;font-size:28px;line-height:28px;color:#1268cb;font-weight:700;letter-spacing:-0.02px;">Logging Service</div>
<div class="t" style="left:592.2px;top:948.0px;font-size:25px;line-height:25px;color:#5b5d73;letter-spacing:0.29px;">ID: logging-service</div>
<svg class="b" style="left:818.7px;top:948.6px;" width="24" height="24" viewBox="0 0 24 24"><g fill="#fff" stroke="#2a2a38" stroke-width="2"><rect x="7.4" y="1.4" width="14.6" height="14.6" rx="2.6"/><rect x="1.2" y="7.4" width="14.6" height="14.6" rx="2.6"/></g></svg>
<div class="t" style="left:1241.0px;top:922.0px;font-size:29.5px;line-height:29.5px;color:#2a2a38;letter-spacing:0.09px;">service</div>
<div class="b" style="left:1672px;top:913px;width:48px;height:48px;background:#e0f4de;border-radius:9px;"></div>
<svg class="b" style="left:1683.5px;top:928px;" width="25.6" height="19" viewBox="-0.5 -0.3 25.6 19"><g fill="none" stroke="#3f7a25" stroke-width="1.6" stroke-linejoin="round"><circle cx="12.3" cy="4.2" r="3.6"/><path d="M9.9,7.6L4.6,17.6H20L14.7,7.6"/><circle cx="3.9" cy="6.5" r="2.6"/><path d="M2.6,9L0.4,14.9H6.2M5.2,9L6.9,13"/><circle cx="20.7" cy="6.5" r="2.6"/><path d="M22,9L24.2,14.9H18.4M19.4,9L17.7,13"/></g></svg>
<div class="t" style="left:1737.0px;top:922.0px;font-size:29.5px;line-height:29.5px;color:#1f1f2c;letter-spacing:0.49px;">account/logging-team</div>
<svg class="b" style="left:2182px;top:882px;" width="100" height="100" viewBox="0 0 100 100"><g fill="none" stroke-width="6.5" stroke-linecap="round"><path d="M54.77,6.51A43.75,43.75 0 0 1 91.30,35.57" stroke="#dc312b"/><path d="M93.45,44.86A43.75,43.75 0 0 1 21.04,82.80" stroke="#f97b35"/><path d="M14.63,75.74A43.75,43.75 0 0 1 9.59,33.23" stroke="#d88f27"/><path d="M14.19,24.87A43.75,43.75 0 0 1 45.23,6.51" stroke="#5855e0"/></g><text x="50.2" y="59.3" text-anchor="middle" font-size="27.5" letter-spacing="0.5" fill="#000">65</text></svg>
<div class="t" style="left:2484.0px;top:891.0px;font-size:42px;line-height:42px;color:#d88f27;font-weight:700;transform-origin:0 0;transform:scaleX(1.115);">65</div>
<div class="t" style="left:2484.5px;top:945.0px;font-size:25px;line-height:25px;color:#5b5d73;letter-spacing:-0.17px;">Avg Score</div>
<div class="b" style="left:2622px;top:907px;width:2px;height:60px;background:#c9cbdc;"></div>
<svg class="b" style="left:2646px;top:882px;" width="100" height="100" viewBox="0 0 100 100"><circle cx="50" cy="50" r="31" fill="#fff" filter="url(#sh)"/><path d="M50.00,9.20A40.8,40.8 0 1 1 11.20,62.61" fill="none" stroke="#fcaa31" stroke-width="5.9" stroke-linecap="round"/><text x="50.3" y="60.6" text-anchor="middle" font-size="28.5" letter-spacing="0.6" fill="#d88f27" stroke="#d88f27" stroke-width="0.5">70</text></svg>
<svg class="b" style="left:2758px;top:882px;" width="100" height="100" viewBox="0 0 100 100"><circle cx="50" cy="50" r="31" fill="#fff" filter="url(#sh)"/><path d="M50.00,9.20A40.8,40.8 0 1 1 37.39,88.80" fill="none" stroke="#fcaa31" stroke-width="5.9" stroke-linecap="round"/><text x="50.3" y="60.6" text-anchor="middle" font-size="28.5" letter-spacing="0.6" fill="#d88f27" stroke="#d88f27" stroke-width="0.5">55</text></svg>
<div class="t" style="left:3352.8px;top:922.0px;font-size:29.5px;line-height:29.5px;color:#2a2a38;letter-spacing:0.36px;">production</div>
<svg class="b" style="left:3576.7px;top:918.6px;" width="38" height="38" viewBox="0 0 38 38"><path d="M19.00,0.00L24.29,12.32L37.64,13.54L27.56,22.38L30.52,35.46L19.00,28.60L7.48,35.46L10.44,22.38L0.36,13.54L13.71,12.32Z" fill="#dadae7"/></svg>
<svg class="b" style="left:3643.8px;top:922px;" width="8" height="34" viewBox="0 0 8 34"><g fill="#8a8ba6"><circle cx="4" cy="4.8" r="3.4"/><circle cx="4" cy="17" r="3.4"/><circle cx="4" cy="29.2" r="3.4"/></g></svg>
<div class="b" style="left:464px;top:1006px;width:3268px;height:2px;background:#eeeff9;"></div>
<svg class="b" style="left:514px;top:1055px;" width="44" height="44" viewBox="0 0 44 44"><path d="M17.68,7.43L19.44,1.76L24.56,1.76L26.32,7.43L29.25,8.64L34.50,5.88L38.12,9.50L35.36,14.75L36.57,17.68L42.24,19.44L42.24,24.56L36.57,26.32L35.36,29.25L38.12,34.50L34.50,38.12L29.25,35.36L26.32,36.57L24.56,42.24L19.44,42.24L17.68,36.57L14.75,35.36L9.50,38.12L5.88,34.50L8.64,29.25L7.43,26.32L1.76,24.56L1.76,19.44L7.43,17.68L8.64,14.75L5.88,9.50L9.50,5.88L14.75,8.64Z" fill="none" stroke="#5251e3" stroke-width="2.7" stroke-linejoin="round"/><circle cx="22" cy="22" r="6.2" fill="none" stroke="#5251e3" stroke-width="2.7"/></svg>
<div class="t" style="left:592.4px;top:1046.0px;font-size:28px;line-height:28px;color:#1268cb;font-weight:700;letter-spacing:0.23px;">Notification Service</div>
<div class="t" style="left:592.2px;top:1088.0px;font-size:25px;line-height:25px;color:#5b5d73;letter-spacing:0.42px;">ID: notification-service</div>
<svg class="b" style="left:862.1px;top:1088.6px;" width="24" height="24" viewBox="0 0 24 24"><g fill="#fff" stroke="#2a2a38" stroke-width="2"><rect x="7.4" y="1.4" width="14.6" height="14.6" rx="2.6"/><rect x="1.2" y="7.4" width="14.6" height="14.6" rx="2.6"/></g></svg>
<div class="t" style="left:1241.0px;top:1062.0px;font-size:29.5px;line-height:29.5px;color:#2a2a38;letter-spacing:0.09px;">service</div>
<div class="b" style="left:1672px;top:1053px;width:48px;height:48px;background:#e0f4de;border-radius:9px;"></div>
<svg class="b" style="left:1683.5px;top:1068px;" width="25.6" height="19" viewBox="-0.5 -0.3 25.6 19"><g fill="none" stroke="#3f7a25" stroke-width="1.6" stroke-linejoin="round"><circle cx="12.3" cy="4.2" r="3.6"/><path d="M9.9,7.6L4.6,17.6H20L14.7,7.6"/><circle cx="3.9" cy="6.5" r="2.6"/><path d="M2.6,9L0.4,14.9H6.2M5.2,9L6.9,13"/><circle cx="20.7" cy="6.5" r="2.6"/><path d="M22,9L24.2,14.9H18.4M19.4,9L17.7,13"/></g></svg>
<div class="t" style="left:1737.0px;top:1062.0px;font-size:29.5px;line-height:29.5px;color:#1f1f2c;letter-spacing:0.58px;">account/notification-team</div>
<svg class="b" style="left:2182px;top:1022px;" width="100" height="100" viewBox="0 0 100 100"><g fill="none" stroke-width="6.5" stroke-linecap="round"><path d="M53.78,6.41A43.75,43.75 0 0 1 53.85,6.42" stroke="#dc312b"/><path d="M62.25,8.00A43.75,43.75 0 0 1 90.13,32.59" stroke="#f97b35"/><path d="M92.95,41.69A43.75,43.75 0 0 1 54.77,93.49" stroke="#d88f27"/><path d="M45.23,93.49A43.75,43.75 0 0 1 45.23,6.51" stroke="#5855e0"/></g><text x="50.2" y="59.3" text-anchor="middle" font-size="27.5" letter-spacing="0.5" fill="#000">72</text></svg>
<div class="t" style="left:2484.0px;top:1031.0px;font-size:42px;line-height:42px;color:#217821;font-weight:700;transform-origin:0 0;transform:scaleX(1.115);">82</div>
<div class="t" style="left:2484.5px;top:1085.0px;font-size:25px;line-height:25px;color:#5b5d73;letter-spacing:-0.17px;">Avg Score</div>
<div class="b" style="left:2622px;top:1047px;width:2px;height:60px;background:#c9cbdc;"></div>
<svg class="b" style="left:2646px;top:1022px;" width="100" height="100" viewBox="0 0 100 100"><circle cx="50" cy="50" r="31" fill="#fff" filter="url(#sh)"/><path d="M50.00,9.20A40.8,40.8 0 1 1 16.99,26.02" fill="none" stroke="#217821" stroke-width="5.9" stroke-linecap="round"/><text x="50.3" y="60.6" text-anchor="middle" font-size="28.5" letter-spacing="0.6" fill="#217821" stroke="#217821" stroke-width="0.5">85</text></svg>
<svg class="b" style="left:2758px;top:1022px;" width="100" height="100" viewBox="0 0 100 100"><circle cx="50" cy="50" r="31" fill="#fff" filter="url(#sh)"/><path d="M50.00,9.20A40.8,40.8 0 1 1 9.92,42.35" fill="none" stroke="#217821" stroke-width="5.9" stroke-linecap="round"/><text x="50.3" y="60.6" text-anchor="middle" font-size="28.5" letter-spacing="0.6" fill="#217821" stroke="#217821" stroke-width="0.5">78</text></svg>
<div class="t" style="left:3352.8px;top:1062.0px;font-size:29.5px;line-height:29.5px;color:#2a2a38;letter-spacing:0.36px;">production</div>
<svg class="b" style="left:3576.7px;top:1058.6px;" width="38" height="38" viewBox="0 0 38 38"><path d="M19.00,0.00L24.29,12.32L37.64,13.54L27.56,22.38L30.52,35.46L19.00,28.60L7.48,35.46L10.44,22.38L0.36,13.54L13.71,12.32Z" fill="#dadae7"/></svg>
<svg class="b" style="left:3643.8px;top:1062px;" width="8" height="34" viewBox="0 0 8 34"><g fill="#8a8ba6"><circle cx="4" cy="4.8" r="3.4"/><circle cx="4" cy="17" r="3.4"/><circle cx="4" cy="29.2" r="3.4"/></g></svg>
<div class="b" style="left:464px;top:1146px;width:3268px;height:2px;background:#eeeff9;"></div>
<svg class="b" style="left:514px;top:1195px;" width="44" height="44" viewBox="0 0 44 44"><path d="M17.68,7.43L19.44,1.76L24.56,1.76L26.32,7.43L29.25,8.64L34.50,5.88L38.12,9.50L35.36,14.75L36.57,17.68L42.24,19.44L42.24,24.56L36.57,26.32L35.36,29.25L38.12,34.50L34.50,38.12L29.25,35.36L26.32,36.57L24.56,42.24L19.44,42.24L17.68,36.57L14.75,35.36L9.50,38.12L5.88,34.50L8.64,29.25L7.43,26.32L1.76,24.56L1.76,19.44L7.43,17.68L8.64,14.75L5.88,9.50L9.50,5.88L14.75,8.64Z" fill="none" stroke="#5251e3" stroke-width="2.7" stroke-linejoin="round"/><circle cx="22" cy="22" r="6.2" fill="none" stroke="#5251e3" stroke-width="2.7"/></svg>
<div class="t" style="left:592.4px;top:1186.0px;font-size:28px;line-height:28px;color:#1268cb;font-weight:700;letter-spacing:0.18px;">Payment Service</div>
<div class="t" style="left:592.2px;top:1228.0px;font-size:25px;line-height:25px;color:#5b5d73;letter-spacing:0.24px;">ID: payment-service</div>
<svg class="b" style="left:833.1px;top:1228.6px;" width="24" height="24" viewBox="0 0 24 24"><g fill="#fff" stroke="#2a2a38" stroke-width="2"><rect x="7.4" y="1.4" width="14.6" height="14.6" rx="2.6"/><rect x="1.2" y="7.4" width="14.6" height="14.6" rx="2.6"/></g></svg>
<div class="t" style="left:1241.0px;top:1202.0px;font-size:29.5px;line-height:29.5px;color:#2a2a38;letter-spacing:0.09px;">service</div>
<div class="b" style="left:1672px;top:1193px;width:48px;height:48px;background:#e0f4de;border-radius:9px;"></div>
<svg class="b" style="left:1683.5px;top:1208px;" width="25.6" height="19" viewBox="-0.5 -0.3 25.6 19"><g fill="none" stroke="#3f7a25" stroke-width="1.6" stroke-linejoin="round"><circle cx="12.3" cy="4.2" r="3.6"/><path d="M9.9,7.6L4.6,17.6H20L14.7,7.6"/><circle cx="3.9" cy="6.5" r="2.6"/><path d="M2.6,9L0.4,14.9H6.2M5.2,9L6.9,13"/><circle cx="20.7" cy="6.5" r="2.6"/><path d="M22,9L24.2,14.9H18.4M19.4,9L17.7,13"/></g></svg>
<div class="t" style="left:1737.0px;top:1202.0px;font-size:29.5px;line-height:29.5px;color:#1f1f2c;letter-spacing:0.45px;">account/payment-team</div>
<svg class="b" style="left:2182px;top:1162px;" width="100" height="100" viewBox="0 0 100 100"><g fill="none" stroke-width="6.5" stroke-linecap="round"><path d="M54.54,6.49A43.75,43.75 0 0 1 54.61,6.49" stroke="#dc312b"/><path d="M63.71,8.45A43.75,43.75 0 0 1 89.73,31.68" stroke="#f97b35"/><path d="M92.75,40.72A43.75,43.75 0 0 1 53.02,93.65" stroke="#d88f27"/><path d="M43.49,93.26A43.75,43.75 0 0 1 45.23,6.51" stroke="#5855e0"/></g><text x="50.2" y="59.3" text-anchor="middle" font-size="27.5" letter-spacing="0.5" fill="#000">88</text></svg>
<div class="t" style="left:2484.0px;top:1171.0px;font-size:42px;line-height:42px;color:#217821;font-weight:700;transform-origin:0 0;transform:scaleX(1.128);">90</div>
<div class="t" style="left:2484.5px;top:1225.0px;font-size:25px;line-height:25px;color:#5b5d73;letter-spacing:-0.17px;">Avg Score</div>
<div class="b" style="left:2622px;top:1187px;width:2px;height:60px;background:#c9cbdc;"></div>
<svg class="b" style="left:2646px;top:1162px;" width="100" height="100" viewBox="0 0 100 100"><circle cx="50" cy="50" r="31" fill="#fff" filter="url(#sh)"/><path d="M50.00,9.20A40.8,40.8 0 1 1 30.34,14.25" fill="none" stroke="#217821" stroke-width="5.9" stroke-linecap="round"/><text x="50.3" y="60.6" text-anchor="middle" font-size="28.5" letter-spacing="0.6" fill="#217821" stroke="#217821" stroke-width="0.5">92</text></svg>
<svg class="b" style="left:2758px;top:1162px;" width="100" height="100" viewBox="0 0 100 100"><circle cx="50" cy="50" r="31" fill="#fff" filter="url(#sh)"/><path d="M50.00,9.20A40.8,40.8 0 1 1 14.25,30.34" fill="none" stroke="#217821" stroke-width="5.9" stroke-linecap="round"/><text x="50.3" y="60.6" text-anchor="middle" font-size="28.5" letter-spacing="0.6" fill="#217821" stroke="#217821" stroke-width="0.5">83</text></svg>
<div class="t" style="left:3352.8px;top:1202.0px;font-size:29.5px;line-height:29.5px;color:#2a2a38;letter-spacing:0.36px;">production</div>
<svg class="b" style="left:3576.7px;top:1198.6px;" width="38" height="38" viewBox="0 0 38 38"><path d="M19.00,0.00L24.29,12.32L37.64,13.54L27.56,22.38L30.52,35.46L19.00,28.60L7.48,35.46L10.44,22.38L0.36,13.54L13.71,12.32Z" fill="#dadae7"/></svg>
<svg class="b" style="left:3643.8px;top:1202px;" width="8" height="34" viewBox="0 0 8 34"><g fill="#8a8ba6"><circle cx="4" cy="4.8" r="3.4"/><circle cx="4" cy="17" r="3.4"/><circle cx="4" cy="29.2" r="3.4"/></g></svg>
<div class="b" style="left:464px;top:1286px;width:3268px;height:2px;background:#eeeff9;"></div>
<svg class="b" style="left:514px;top:1335px;" width="44" height="44" viewBox="0 0 44 44"><path d="M17.68,7.43L19.44,1.76L24.56,1.76L26.32,7.43L29.25,8.64L34.50,5.88L38.12,9.50L35.36,14.75L36.57,17.68L42.24,19.44L42.24,24.56L36.57,26.32L35.36,29.25L38.12,34.50L34.50,38.12L29.25,35.36L26.32,36.57L24.56,42.24L19.44,42.24L17.68,36.57L14.75,35.36L9.50,38.12L5.88,34.50L8.64,29.25L7.43,26.32L1.76,24.56L1.76,19.44L7.43,17.68L8.64,14.75L5.88,9.50L9.50,5.88L14.75,8.64Z" fill="none" stroke="#5251e3" stroke-width="2.7" stroke-linejoin="round"/><circle cx="22" cy="22" r="6.2" fill="none" stroke="#5251e3" stroke-width="2.7"/></svg>
<div class="t" style="left:592.4px;top:1326.0px;font-size:28px;line-height:28px;color:#1268cb;font-weight:700;letter-spacing:0.12px;">Reporting Service</div>
<div class="t" style="left:592.2px;top:1368.0px;font-size:25px;line-height:25px;color:#5b5d73;letter-spacing:0.38px;">ID: reporting-service</div>
<svg class="b" style="left:839.1px;top:1368.6px;" width="24" height="24" viewBox="0 0 24 24"><g fill="#fff" stroke="#2a2a38" stroke-width="2"><rect x="7.4" y="1.4" width="14.6" height="14.6" rx="2.6"/><rect x="1.2" y="7.4" width="14.6" height="14.6" rx="2.6"/></g></svg>
<div class="t" style="left:1241.0px;top:1342.0px;font-size:29.5px;line-height:29.5px;color:#2a2a38;letter-spacing:0.09px;">service</div>
<div class="b" style="left:1672px;top:1333px;width:48px;height:48px;background:#e0f4de;border-radius:9px;"></div>
<svg class="b" style="left:1683.5px;top:1348px;" width="25.6" height="19" viewBox="-0.5 -0.3 25.6 19"><g fill="none" stroke="#3f7a25" stroke-width="1.6" stroke-linejoin="round"><circle cx="12.3" cy="4.2" r="3.6"/><path d="M9.9,7.6L4.6,17.6H20L14.7,7.6"/><circle cx="3.9" cy="6.5" r="2.6"/><path d="M2.6,9L0.4,14.9H6.2M5.2,9L6.9,13"/><circle cx="20.7" cy="6.5" r="2.6"/><path d="M22,9L24.2,14.9H18.4M19.4,9L17.7,13"/></g></svg>
<div class="t" style="left:1737.0px;top:1342.0px;font-size:29.5px;line-height:29.5px;color:#1f1f2c;letter-spacing:0.60px;">account/reporting-team</div>
<svg class="b" style="left:2182px;top:1302px;" width="100" height="100" viewBox="0 0 100 100"><g fill="none" stroke-width="6.5" stroke-linecap="round"><path d="M57.34,6.87A43.75,43.75 0 0 1 91.15,35.14" stroke="#f97b35"/><path d="M93.39,44.41A43.75,43.75 0 0 1 28.83,88.29" stroke="#d88f27"/><path d="M21.04,82.79A43.75,43.75 0 0 1 45.23,6.51" stroke="#5855e0"/></g><g><path d="M51.2,3.2V9.7" stroke="#dc312b" stroke-width="0.9" stroke-linecap="butt"/></g><text x="50.2" y="59.3" text-anchor="middle" font-size="27.5" letter-spacing="0.5" fill="#000">98</text></svg>
<div class="t" style="left:2484.0px;top:1311.0px;font-size:42px;line-height:42px;color:#de2f2a;font-weight:700;transform-origin:0 0;transform:scaleX(1.104);">39</div>
<div class="t" style="left:2484.5px;top:1365.0px;font-size:25px;line-height:25px;color:#5b5d73;letter-spacing:-0.17px;">Avg Score</div>
<div class="b" style="left:2622px;top:1327px;width:2px;height:60px;background:#c9cbdc;"></div>
<svg class="b" style="left:2646px;top:1302px;" width="100" height="100" viewBox="0 0 100 100"><circle cx="50" cy="50" r="31" fill="#fff" filter="url(#sh)"/><path d="M50.00,9.20A40.8,40.8 0 0 1 81.44,23.99" fill="none" stroke="#de2f2a" stroke-width="5.9" stroke-linecap="round"/><text x="50.3" y="60.6" text-anchor="middle" font-size="28.5" letter-spacing="0.6" fill="#de2f2a" stroke="#de2f2a" stroke-width="0.5">14</text></svg>
<svg class="b" style="left:2758px;top:1302px;" width="100" height="100" viewBox="0 0 100 100"><circle cx="50" cy="50" r="31" fill="#fff" filter="url(#sh)"/><path d="M50.00,9.20A40.8,40.8 0 1 1 16.99,73.98" fill="none" stroke="#fcaa31" stroke-width="5.9" stroke-linecap="round"/><text x="50.3" y="60.6" text-anchor="middle" font-size="28.5" letter-spacing="0.6" fill="#d88f27" stroke="#d88f27" stroke-width="0.5">65</text></svg>
<div class="t" style="left:3352.8px;top:1342.0px;font-size:29.5px;line-height:29.5px;color:#2a2a38;letter-spacing:0.36px;">production</div>
<svg class="b" style="left:3576.7px;top:1338.6px;" width="38" height="38" viewBox="0 0 38 38"><path d="M19.00,0.00L24.29,12.32L37.64,13.54L27.56,22.38L30.52,35.46L19.00,28.60L7.48,35.46L10.44,22.38L0.36,13.54L13.71,12.32Z" fill="#dadae7"/></svg>
<svg class="b" style="left:3643.8px;top:1342px;" width="8" height="34" viewBox="0 0 8 34"><g fill="#8a8ba6"><circle cx="4" cy="4.8" r="3.4"/><circle cx="4" cy="17" r="3.4"/><circle cx="4" cy="29.2" r="3.4"/></g></svg>
<div class="b" style="left:464px;top:1426px;width:3268px;height:2px;background:#eeeff9;"></div>
<svg class="b" style="left:514px;top:1475px;" width="44" height="44" viewBox="0 0 44 44"><path d="M17.68,7.43L19.44,1.76L24.56,1.76L26.32,7.43L29.25,8.64L34.50,5.88L38.12,9.50L35.36,14.75L36.57,17.68L42.24,19.44L42.24,24.56L36.57,26.32L35.36,29.25L38.12,34.50L34.50,38.12L29.25,35.36L26.32,36.57L24.56,42.24L19.44,42.24L17.68,36.57L14.75,35.36L9.50,38.12L5.88,34.50L8.64,29.25L7.43,26.32L1.76,24.56L1.76,19.44L7.43,17.68L8.64,14.75L5.88,9.50L9.50,5.88L14.75,8.64Z" fill="none" stroke="#5251e3" stroke-width="2.7" stroke-linejoin="round"/><circle cx="22" cy="22" r="6.2" fill="none" stroke="#5251e3" stroke-width="2.7"/></svg>
<div class="t" style="left:592.4px;top:1466.0px;font-size:28px;line-height:28px;color:#1268cb;font-weight:700;letter-spacing:0.32px;">User Management UI</div>
<div class="t" style="left:592.2px;top:1508.0px;font-size:25px;line-height:25px;color:#5b5d73;letter-spacing:0.16px;">ID: user-management-ui</div>
<svg class="b" style="left:879.4px;top:1508.6px;" width="24" height="24" viewBox="0 0 24 24"><g fill="#fff" stroke="#2a2a38" stroke-width="2"><rect x="7.4" y="1.4" width="14.6" height="14.6" rx="2.6"/><rect x="1.2" y="7.4" width="14.6" height="14.6" rx="2.6"/></g></svg>
<div class="t" style="left:1241.0px;top:1482.0px;font-size:29.5px;line-height:29.5px;color:#2a2a38;letter-spacing:0.33px;">website</div>
<div class="b" style="left:1672px;top:1473px;width:48px;height:48px;background:#e0f4de;border-radius:9px;"></div>
<svg class="b" style="left:1683.5px;top:1488px;" width="25.6" height="19" viewBox="-0.5 -0.3 25.6 19"><g fill="none" stroke="#3f7a25" stroke-width="1.6" stroke-linejoin="round"><circle cx="12.3" cy="4.2" r="3.6"/><path d="M9.9,7.6L4.6,17.6H20L14.7,7.6"/><circle cx="3.9" cy="6.5" r="2.6"/><path d="M2.6,9L0.4,14.9H6.2M5.2,9L6.9,13"/><circle cx="20.7" cy="6.5" r="2.6"/><path d="M22,9L24.2,14.9H18.4M19.4,9L17.7,13"/></g></svg>
<div class="t" style="left:1737.0px;top:1482.0px;font-size:29.5px;line-height:29.5px;color:#1f1f2c;letter-spacing:0.39px;">account/user-team</div>
<svg class="b" style="left:2182px;top:1442px;" width="100" height="100" viewBox="0 0 100 100"><g fill="none" stroke-width="6.5" stroke-linecap="round"><path d="M54.77,6.51A43.75,43.75 0 0 1 57.03,6.82" stroke="#dc312b"/><path d="M66.22,9.37A43.75,43.75 0 0 1 84.21,22.73" stroke="#f97b35"/><path d="M89.31,30.79A43.75,43.75 0 0 1 72.70,87.40" stroke="#d88f27"/><path d="M64.06,91.43A43.75,43.75 0 1 1 45.23,6.51" stroke="#5855e0"/></g><text x="50.2" y="59.3" text-anchor="middle" font-size="27.5" letter-spacing="0.5" fill="#000">50</text></svg>
<div class="t" style="left:2484.0px;top:1451.0px;font-size:42px;line-height:42px;color:#d88f27;font-weight:700;transform-origin:0 0;transform:scaleX(1.045);">75</div>
<div class="t" style="left:2484.5px;top:1505.0px;font-size:25px;line-height:25px;color:#5b5d73;letter-spacing:-0.17px;">Avg Score</div>
<div class="b" style="left:2622px;top:1467px;width:2px;height:60px;background:#c9cbdc;"></div>
<svg class="b" style="left:2646px;top:1442px;" width="100" height="100" viewBox="0 0 100 100"><circle cx="50" cy="50" r="31" fill="#fff" filter="url(#sh)"/><path d="M50.00,9.20A40.8,40.8 0 1 1 11.20,37.39" fill="none" stroke="#217821" stroke-width="5.9" stroke-linecap="round"/><text x="50.3" y="60.6" text-anchor="middle" font-size="28.5" letter-spacing="0.6" fill="#217821" stroke="#217821" stroke-width="0.5">80</text></svg>
<svg class="b" style="left:2758px;top:1442px;" width="100" height="100" viewBox="0 0 100 100"><circle cx="50" cy="50" r="31" fill="#fff" filter="url(#sh)"/><path d="M50.00,9.20A40.8,40.8 0 1 1 16.99,73.98" fill="none" stroke="#fcaa31" stroke-width="5.9" stroke-linecap="round"/><text x="50.3" y="60.6" text-anchor="middle" font-size="28.5" letter-spacing="0.6" fill="#d88f27" stroke="#d88f27" stroke-width="0.5">65</text></svg>
<svg class="b" style="left:2870px;top:1442px;" width="100" height="100" viewBox="0 0 100 100"><circle cx="50" cy="50" r="31" fill="#fff" filter="url(#sh)"/><path d="M50.00,9.20A40.8,40.8 0 1 1 11.20,37.39" fill="none" stroke="#217821" stroke-width="5.9" stroke-linecap="round"/><text x="50.3" y="60.6" text-anchor="middle" font-size="28.5" letter-spacing="0.6" fill="#217821" stroke="#217821" stroke-width="0.5">80</text></svg>
<div class="t" style="left:3352.8px;top:1482.0px;font-size:29.5px;line-height:29.5px;color:#2a2a38;letter-spacing:0.36px;">production</div>
<svg class="b" style="left:3576.7px;top:1478.6px;" width="38" height="38" viewBox="0 0 38 38"><path d="M19.00,0.00L24.29,12.32L37.64,13.54L27.56,22.38L30.52,35.46L19.00,28.60L7.48,35.46L10.44,22.38L0.36,13.54L13.71,12.32Z" fill="#dadae7"/></svg>
<svg class="b" style="left:3643.8px;top:1482px;" width="8" height="34" viewBox="0 0 8 34"><g fill="#8a8ba6"><circle cx="4" cy="4.8" r="3.4"/><circle cx="4" cy="17" r="3.4"/><circle cx="4" cy="29.2" r="3.4"/></g></svg>
<div class="b" style="left:1208px;top:354px;width:2px;height:1184px;background:#ececf5;"></div>
<div class="b" style="left:1210px;top:354px;width:6px;height:1184px;background:linear-gradient(90deg,rgba(200,200,220,.22),rgba(255,255,255,0));"></div>
<div class="b" style="left:3527px;top:354px;width:2px;height:1184px;background:#ececf5;"></div>
<div class="b" style="left:3521px;top:354px;width:6px;height:1184px;background:linear-gradient(270deg,rgba(200,200,220,.2),rgba(255,255,255,0));"></div>
<div class="b" style="left:466px;top:1538px;width:3274px;height:12px;background:#fff;"></div>
<div class="b" style="left:470px;top:1544px;width:1878px;height:12px;background:#d3d3d3;border-radius:8px;"></div>
<div class="b" style="left:3732px;top:354px;width:8px;height:1184px;background:#fff;"></div>
<div class="b" style="left:3738px;top:363px;width:8px;height:1137px;background:#d0d0d0;border-radius:6px;"></div></body></html>
